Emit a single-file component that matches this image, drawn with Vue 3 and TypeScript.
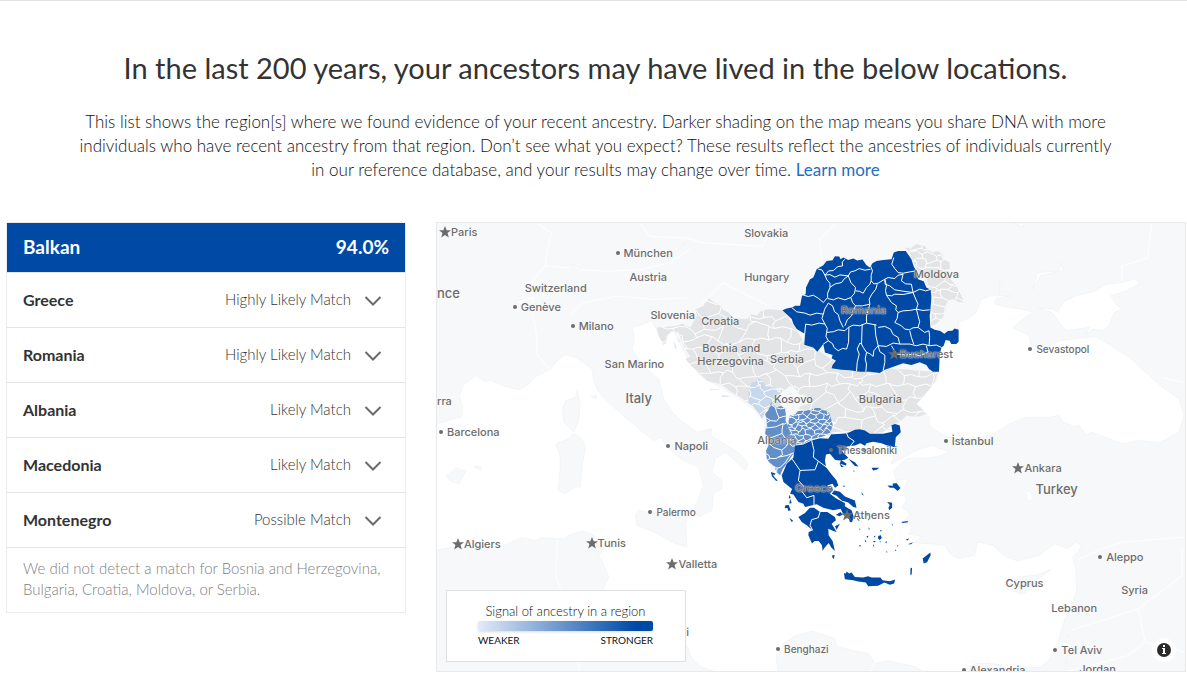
<script setup lang="ts">
import { ref } from 'vue'

interface Match { country: string; level: string }
interface Label { text: string; x: number; y: number; size: 's' | 'm' | 'l'; mark?: 'dot' | 'star' }

const matches: Match[] = [
  { country: 'Greece', level: 'Highly Likely Match' },
  { country: 'Romania', level: 'Highly Likely Match' },
  { country: 'Albania', level: 'Likely Match' },
  { country: 'Macedonia', level: 'Likely Match' },
  { country: 'Montenegro', level: 'Possible Match' },
]

const open = ref<string | null>(null)
function toggle(country: string) {
  open.value = open.value === country ? null : country
}

// Label places are in map units of 750 x 449.
const labels: Label[] = [
  { text: 'Paris', x: 2, y: 9, size: 'm', mark: 'star' },
  { text: 'nce', x: 0, y: 70, size: 'l' },
  { text: 'rra', x: 0, y: 178, size: 'm' },
  { text: 'München', x: 179, y: 30, size: 'm', mark: 'dot' },
  { text: 'Austria', x: 193, y: 54, size: 'm' },
  { text: 'Switzerland', x: 88, y: 65, size: 'm' },
  { text: 'Genève', x: 76, y: 84, size: 'm', mark: 'dot' },
  { text: 'Milano', x: 134, y: 103, size: 'm', mark: 'dot' },
  { text: 'Slovakia', x: 308, y: 10, size: 'm' },
  { text: 'Hungary', x: 308, y: 54, size: 'm' },
  { text: 'Slovenia', x: 214, y: 92, size: 'm' },
  { text: 'Croatia', x: 265, y: 98, size: 'm' },
  { text: 'Bosnia and', x: 266, y: 125, size: 'm' },
  { text: 'Herzegovina', x: 261, y: 138, size: 'm' },
  { text: 'Serbia', x: 334, y: 136, size: 'm' },
  { text: 'San Marino', x: 168, y: 141, size: 'm' },
  { text: 'Italy', x: 189, y: 175, size: 'l' },
  { text: 'Kosovo', x: 338, y: 176, size: 'm' },
  { text: 'Bulgaria', x: 423, y: 176, size: 'm' },
  { text: 'Moldova', x: 478, y: 51, size: 'm' },
  { text: 'Romania', x: 405, y: 87, size: 'm' },
  { text: 'Bucharest', x: 452, y: 131, size: 'm', mark: 'star' },
  { text: 'Barcelona', x: 2, y: 209, size: 'm', mark: 'dot' },
  { text: 'Napoli', x: 230, y: 223, size: 'm', mark: 'dot' },
  { text: 'Albania', x: 321, y: 217, size: 'm' },
  { text: 'Thessaloniki', x: 393, y: 228, size: 's', mark: 'dot' },
  { text: 'Greece', x: 359, y: 266, size: 'm' },
  { text: 'Athens', x: 405, y: 293, size: 'm', mark: 'star' },
  { text: 'Palermo', x: 212, y: 290, size: 's', mark: 'dot' },
  { text: 'Algiers', x: 15, y: 322, size: 'm', mark: 'star' },
  { text: 'Tunis', x: 149, y: 321, size: 'm', mark: 'star' },
  { text: 'Valletta', x: 230, y: 342, size: 'm', mark: 'star' },
  { text: 'i', x: 250, y: 410, size: 'm' },
  { text: 'Benghazi', x: 340, y: 427, size: 's', mark: 'dot' },
  { text: 'Sevastopol', x: 593, y: 126, size: 's', mark: 'dot' },
  { text: 'İstanbul', x: 508, y: 218, size: 'm', mark: 'dot' },
  { text: 'Ankara', x: 577, y: 246, size: 'm', mark: 'star' },
  { text: 'Turkey', x: 600, y: 267, size: 'l' },
  { text: 'Aleppo', x: 663, y: 335, size: 'm', mark: 'dot' },
  { text: 'Syria', x: 686, y: 368, size: 'm' },
  { text: 'Cyprus', x: 570, y: 361, size: 'm' },
  { text: 'Lebanon', x: 616, y: 386, size: 'm' },
  { text: 'Tel Aviv', x: 618, y: 428, size: 'm', mark: 'dot' },
  { text: 'Alexandria', x: 526, y: 448, size: 'm', mark: 'dot' },
  { text: 'Jordan', x: 644, y: 447, size: 'm' },
]

function place(l: Label) {
  return { left: (l.x / 750) * 100 + '%', top: (l.y / 449) * 100 + '%' }
}

// Uneven honeycomb used for the district borders inside a country.
function mesh(x0: number, y0: number, x1: number, y1: number, s: number): string {
  const noise = (a: number, b: number) => {
    const v = Math.sin(a * 127.1 + b * 311.7 + s) * 43758.5453
    return v - Math.floor(v) - 0.5
  }
  const point = (i: number, j: number): [number, number] => [
    x0 + i * s + noise(i, j) * s * 0.8,
    y0 + j * s + ((i + j) % 2 ? s * 0.16 : -s * 0.16) + noise(j + 57, i) * s * 0.8,
  ]
  const edge = (a: [number, number], b: [number, number], k: number) => {
    const mx = (a[0] + b[0]) / 2 + noise(k, a[0]) * s * 0.5
    const my = (a[1] + b[1]) / 2 + noise(a[1], k) * s * 0.5
    return `M${a.map(Math.round).join(' ')}L${Math.round(mx)} ${Math.round(my)} ${b.map(Math.round).join(' ')}`
  }
  let d = ''
  for (let j = 0; y0 + j * s <= y1; j++) {
    for (let i = 0; x0 + i * s <= x1; i++) {
      d += edge(point(i, j), point(i + 1, j), i + j)
      if ((i + j) % 2) d += edge(point(i, j), point(i, j + 1), i - j)
    }
  }
  return d
}

const greyMesh = mesh(640, 210, 1530, 650, 35)
const moldovaMesh = mesh(1390, 50, 1600, 320, 22)
const montenegroMesh = mesh(920, 450, 1050, 600, 24)
const albaniaMesh = mesh(970, 520, 1100, 770, 30)
const macedoniaMesh = mesh(1040, 540, 1200, 680, 12)

const grey = 'M662 314L692 312 722 309 737 302 762 314 782 279 777 259 802 249 817 226 835 240 852 249 862 262 877 269 890 284 912 289 935 288 945 275 962 278 975 264 997 259 1042 262 1100 350 1200 420 1400 440 1507 449 1497 479 1477 504 1460 525 1442 544 1455 555 1472 574 1442 584 1412 579 1397 594 1367 609 1342 629 1302 634 1257 624 1187 629 1180 640 1170 580 1100 560 1050 560 990 560 952 552 912 524 885 508 852 484 812 474 800 462 782 444 765 430 747 409 762 402 742 369 727 329 705 325 690 340 690 360 680 367 665 335Z'
const moldova = 'M1407 74L1425 76 1442 64 1467 69 1478 82 1492 89 1505 84 1522 94 1520 108 1542 118 1542 165 1562 190 1575 215 1587 238 1570 238 1552 229 1537 234 1530 262 1522 282 1500 305 1487 309 1487 209 1467 169 1442 139 1422 89Z'
const montenegro = 'M937 504L947 479 958 478 967 467 982 479 990 492 1012 494 1037 509 1017 524 1017 542 997 546 990 560 982 580 977 589 970 575 957 559 950 550 937 541Z'
const albania = 'M1007 534L1012 550 1022 554 1035 550 1047 559 1050 580 1048 594 1058 615 1062 634 1082 659 1072 694 1052 724 1040 740 1032 759 1020 748 1017 734 1000 720 992 709 990 684 997 670 997 644 987 634 992 594 987 574 997 562Z'
const macedonia = 'M1062 579L1078 575 1085 566 1102 564 1125 562 1135 556 1152 556 1160 562 1170 562 1182 574 1190 609 1182 634 1160 642 1132 649 1102 664 1077 666 1062 639 1055 604Z'
</script>

<template>
  <main class="page">
    <header class="intro">
      <h1>In the last 200 years, your ancestors may have lived in the below locations.</h1>
      <p>
        This list shows the region[s] where we found evidence of your recent ancestry. Darker shading on the map means you share DNA with more<br>
        individuals who have recent ancestry from that region. Don’t see what you expect? These results reflect the ancestries of individuals currently<br>
        in our reference database, and your results may change over time. <a href="#learn">Learn more</a>
      </p>
    </header>

    <div class="results">
      <section class="list" aria-label="Balkan">
        <h2 class="total"><span>Balkan</span><span>94.0%</span></h2>
        <ul>
          <li v-for="m in matches" :key="m.country">
            <button type="button" class="row" :aria-expanded="open === m.country" @click="toggle(m.country)">
              <span class="country">{{ m.country }}</span>
              <span class="level">{{ m.level }}</span>
              <svg class="chevron" viewBox="0 0 18 16" aria-hidden="true"><path d="M1.5 6L9 13.500L16.500 6" /></svg>
            </button>
          </li>
        </ul>
        <p class="none">We did not detect a match for Bosnia and Herzegovina, Bulgaria, Croatia, Moldova, or Serbia.</p>
      </section>

      <section class="map" aria-label="Map of ancestry regions">
        <svg class="chart" viewBox="0 0 2250 1347" preserveAspectRatio="none" aria-hidden="true">
          <defs>
            <clipPath id="c-grey"><path :d="grey" /></clipPath>
            <clipPath id="c-mol"><path :d="moldova" /></clipPath>
            <clipPath id="c-mon"><path :d="montenegro" /></clipPath>
            <clipPath id="c-alb"><path :d="albania" /></clipPath>
            <clipPath id="c-mac"><path :d="macedonia" /></clipPath>
          </defs>

          <g class="sea">
            <path d="M-5 607L42 591 72 584 77 554 67 519 82 484 117 459 142 476 167 474 197 489 247 501 277 484 302 459 342 439 360 415 387 394 422 407 467 439 472 480 487 509 527 549 572 589 632 639 652 654 674 644 687 669 712 689 742 714 787 734 802 789 782 840 770 860 787 884 827 864 832 814 857 799 857 774 827 749 837 709 867 689 902 719 927 744 937 724 912 694 857 659 822 639 827 619 782 629 742 600 712 574 682 530 667 469 637 444 607 409 587 379 594 349 587 314 622 304 642 294 652 304 682 364 697 334 712 324 742 384 762 424 797 464 852 494 902 524 952 559 985 600 990 700 1010 750 1060 700 1180 650 1370 620 1392 634 1382 669 1366 725 1412 699 1452 679 1492 669 1515 680 1542 686 1517 699 1482 706 1412 709 1372 744 1382 774 1417 769 1402 804 1412 834 1397 854 1422 874 1402 899 1432 914 1417 934 1462 944 1430 962 1482 964 1527 969 1547 999 1572 1009 1617 999 1627 959 1672 969 1712 1004 1747 1016 1812 999 1857 964 1897 979 1922 959 1937 969 1932 984 1912 1004 1922 1044 1924 1104 1907 1154 1887 1194 1867 1264 1842 1314 1812 1336 1712 1339 1672 1324 1622 1324 1570 1350 1467 1350 1432 1332 1357 1317 1317 1324 1297 1294 1252 1286 1202 1272 1197 1249 1127 1227 1077 1242 1042 1264 1020 1304 1027 1352 847 1352 792 1334 767 1309 750 1269 600 1190 530 1130 500 1100 517 1064 487 999 505 970 472 960 472 939 437 926 397 939 380 950 312 946 297 955 252 946 197 972 42 976 -5 984Z" />
            <path d="M1482 611L1482 584 1472 574 1442 544 1477 504 1502 474 1507 449 1520 359 1567 359 1570 299 1602 284 1622 269 1637 229 1667 219 1727 219 1682 227 1677 244 1722 254 1765 260 1792 269 1762 289 1732 314 1782 339 1785 365 1800 385 1822 379 1872 354 1952 344 1982 341 2027 369 2082 404 2132 449 2182 494 2232 529 2247 579 2232 629 2172 661 2117 654 2062 664 1972 629 1952 637 1932 609 1912 611 1882 597 1872 579 1842 584 1772 584 1722 604 1662 641 1592 649 1532 644Z" />
            <path d="M1867 269L1882 239 1922 219 1982 204 2012 184 2062 179 2102 167 2112 184 2072 204 2027 219 2042 244 2062 259 2037 269 2022 309 2002 324 1972 319 1952 337 1962 314 1892 324 1872 299 1850 269 1807 257 1850 258Z" />
            <path d="M1792 199L1807 149 1872 144 1877 119 1884 144 1817 157ZM1692 175L1698 200 1692 212ZM406 124L435 139 418 139ZM240 235L258 229 270 236 250 245ZM1736 0L1764 0 1764 12ZM1772 812L1782 802 1792 825 1786 838 1774 830ZM699 85L750 60 720 82ZM1895 1230L1903 1222 1900 1246ZM1893 1310L1897 1336 1890 1340Z" />
          </g>
          <g class="land">
            <path d="M422 504L430 539 427 589 412 629 382 599 377 559 387 534 417 524ZM357 664L395 650 412 633 432 645 447 674 437 724 432 794 412 794 387 814 364 804 370 744 370 700ZM597 879L607 864 632 869 682 879 762 864 747 904 752 974 717 964 652 929 602 909ZM27 762L62 734 72 744 87 744 67 784 47 779ZM109 732L132 732 134 744ZM463 520L480 520 478 530ZM1722 1084L1747 1064 1802 1059 1847 1042 1802 1074 1792 1099 1757 1116 1732 1104Z" />
          </g>
          <g class="frontier">
            <path d="M300 0L345 30 335 65 325 130 400 135M262 230L290 225 285 250M325 130L250 215M427 140L520 145 610 140 700 120 760 80M400 275L440 240 540 220 650 230 750 225M285 250L300 340 300 395 340 440M610 0L640 40 750 45M750 45L800 60 980 70 1000 20M780 260L860 180 1000 250M2150 0L2138 105 2060 130 2060 175M2180 465L2250 480M362 954L357 1060 372 1100M410 1250L430 1347M1930 1010L2000 980 2060 960 2250 944M1907 1224L2110 1160 2242 1060 2242 980M1870 1264L1910 1270M1900 1347L2080 1300 2130 1260 2110 1160M2130 1260L2250 1290M1317 1324L1300 1350M1180 300L1150 50 1200 0" />
          </g>

          <path class="grey" :d="grey" />
          <path class="district" :d="greyMesh" clip-path="url(#c-grey)" />
          <path class="kosovo" d="M1027 514L1050 500 1062 489 1080 499 1090 515 1112 519 1117 544 1092 552 1085 564 1062 574 1052 560 1032 544Z" />
          <path class="grey" :d="moldova" />
          <path class="district" :d="moldovaMesh" clip-path="url(#c-mol)" />
          <g class="grey">
            <path d="M722 345L732 358 725 355ZM712 352L722 378 715 375ZM800 485L825 484ZM820 498L855 502 822 502ZM855 518L890 520 860 524Z" />
          </g>
          <path class="pale" :d="montenegro" />
          <path class="district" :d="montenegroMesh" clip-path="url(#c-mon)" />
          <path class="mid" :d="albania" />
          <path class="district" :d="albaniaMesh" clip-path="url(#c-alb)" />
          <path class="mid" :d="macedonia" />
          <path class="district" :d="macedoniaMesh" clip-path="url(#c-mac)" />

          <g transform="translate(1002 -21)">
            <path class="strong" d="M37 283L50 278 65 275 76 270 90 270 96 240 107 235 108 215 120 190 130 185 140 160 160 148 170 135 188 133 195 121 208 122 212 130 220 125 235 132 250 128 262 134 278 131 290 148 300 155 308 142 320 135 340 132 365 130 372 110 385 105 408 105 425 130 432 152 440 165 445 190 462 196 470 215 483 222 485 245 482 285 480 300 482 335 495 342 512 346 524 354 535 346 548 345 555 338 567 342 567 378 560 385 545 385 540 375 528 373 522 390 515 395 510 420 508 468 490 468 478 460 470 448 450 440 425 448 400 443 375 452 345 462 330 472 300 468 270 468 240 464 215 462 185 458 188 448 198 435 185 428 188 418 165 410 160 385 152 395 142 408 130 395 103 387 105 355 80 340 70 325 65 310Z" />
            <path class="county" d="M145 160L156 162 165 178 180 176 195 184 210 177 235 180 242 168 255 165 268 158 285 163 302 160M225 130L217 138 218 150 204 152 190 164 176 165 165 178 171 192 180 202 180 215 173 232 173 245 160 260 146 248 130 238 115 242 100 238M180 214L196 204 215 200 222 190 235 180 243 200 257 215 254 232 243 245 225 252 205 246 190 252 173 248M302 150L308 165 304 178 304 195 312 204 325 202 345 190 350 210 347 224 350 238M257 225L268 226 280 232 290 215 300 205 304 195M65 275L80 288 105 292 120 298 140 292 160 295 164 280 175 262 188 270 194 288 205 296 210 315 220 335M160 295L156 308 165 325 148 322 125 328 107 325 104 355M165 325L172 338 170 350 190 348 205 342 225 345 235 335 250 328 270 330 290 322 320 328M170 350L168 362 175 375 160 385M175 375L188 384 192 395 205 405 218 398 230 400 236 380 237 335M243 245L248 260 257 270 250 285 245 300 232 312 225 330M257 270L278 270 300 265 298 250 306 235 318 220 322 205M300 265L296 280 290 300 290 322M277 325L275 385 270 382 262 400 268 415 262 440 260 466M275 385L280 395 290 410 286 430 290 445 288 468M290 410L300 414 310 422 312 405 325 390 318 360 315 325M325 335L345 332 362 340 370 356 385 365 390 385 370 382 350 392 325 390 330 408 345 418 345 440 340 465M390 385L420 385 440 390 460 385 480 390 500 388 515 395M345 190L346 205 360 210 375 222 400 226 430 230 450 220 468 225 485 220M372 125L366 145 375 158 385 170 400 172 420 168 440 165M345 190L355 185 375 188 385 178 400 175 395 195 408 204 425 205 430 230M350 238L365 240 375 235 400 236 430 230 438 250 445 265 440 280 420 284 400 285 385 290 378 282 380 270 365 260 350 238M385 290L382 308 375 320 395 330 405 340 420 342 430 336 445 335 450 318 445 300 440 280 460 284 480 282M420 345L425 365 432 385M445 335L465 350 478 345 480 365 478 390M470 390L475 410 450 420 430 415 410 418 380 415 365 390" />
          </g>

          <g transform="translate(912 444)">
            <path class="strong" d="M165 225L190 222 215 210 240 203 265 205 275 190 325 187 345 178 360 176 375 180 390 190 430 190 458 184 455 164 466 160 480 165 483 185 468 200 465 230 440 224 425 218 400 214 380 218 375 226 362 218 345 225 320 228 320 240 305 240 325 262 315 268 297 270 285 268 270 250 258 252 255 270 258 290 275 312 290 330 295 345 285 352 278 340 262 345 280 358 270 370 290 385 315 398 315 408 335 420 342 440 336 456 330 455 325 440 312 435 302 415 280 420 250 412 230 402 195 410 190 400 175 395 160 372 150 370 156 356 130 335 125 315 140 280 160 262Z" />
            <path class="strong" d="M175 440L195 428 210 412 222 412 240 425 262 425 285 440 288 450 275 460 290 485 280 482 265 475 266 495 278 512 285 542 274 532 266 518 252 535 248 542 246 525 236 512 224 512 216 520 205 495 206 485 218 480 200 465 185 455ZM283 360L300 364 315 378 345 390 350 412 340 410 325 396 305 390 290 376 275 370ZM288 433L302 425 308 433 298 438ZM285 468L300 460 290 478ZM303 268L320 280 318 285 300 280ZM325 265L345 275 356 288 345 287ZM298 278L312 290 304 290ZM368 235L380 236 378 245 368 242ZM395 292L418 292 412 297 400 300ZM443 345L460 346 458 340 470 338 482 353 474 362 462 352 450 352ZM442 395L457 397 457 412 448 420 446 412 450 404ZM485 455L503 452 505 456 488 458ZM549 565L572 547 573 555 562 576 552 580ZM512 595L517 592 516 612 512 615ZM312 608L318 610 320 604 328 610 335 607 345 620 370 622 385 618 395 622 422 622 428 630 450 633 466 628 463 640 450 644 434 637 415 647 385 648 378 637 355 634 340 630 315 627ZM92 305L106 309 104 314 98 312 104 322 113 330 108 332 96 318ZM148 373L152 383 146 384ZM136 405L146 404 152 420 145 422 142 413 134 414ZM148 442L160 452 154 454ZM277 555L284 554 282 566 277 562ZM150 385L155 398 148 400ZM365 365L372 375 366 372ZM415 498L422 494 426 502 420 509 415 505ZM378 428L386 434 380 436ZM348 425L360 428 355 433ZM350 440L360 452 354 450ZM383 445L390 448 386 450ZM358 475L362 475 360 480ZM387 470L390 478 386 476ZM380 498L386 496 382 504ZM402 498L407 496 404 502ZM400 512L409 512 403 517ZM375 510L380 512 376 516ZM358 524L363 524 360 530ZM400 522L404 528 400 528ZM436 515L441 513 440 520ZM420 480L426 480 423 484ZM455 463L460 462 458 466ZM498 508L508 504 504 511ZM504 522L520 516 514 522ZM438 543L444 545 440 547ZM466 538L470 540 466 542ZM472 525L476 526 474 530ZM420 512L424 515 420 516ZM340 300L345 302 342 304ZM308 346L316 346 312 350Z" />
            <path class="county" d="M215 210L222 240 220 260 235 272 225 298 180 300 158 268M235 272L262 292M180 300L175 330 195 352M275 190L320 187 325 200 343 212 325 235M185 362L200 382 222 375 222 405M240 425L235 442 215 448 210 465 218 480M158 268L152 262" />
          </g>
        </svg>

        <span v-for="l in labels" :key="l.text" class="label" :class="l.size" :style="place(l)">
          <svg v-if="l.mark === 'star'" class="star" viewBox="0 0 12 12" aria-hidden="true"><path d="M6 0L7.600 4.200H12L8.500 7L9.800 11.500L6 8.900L2.200 11.500L3.500 7L0 4.200H4.400Z" /></svg>
          <i v-else-if="l.mark === 'dot'" class="dot"></i>{{ l.text }}
        </span>

        <div class="legend">
          <p>Signal of ancestry in a region</p>
          <div class="scale"></div>
          <div class="ends"><span>WEAKER</span><span>STRONGER</span></div>
        </div>

        <button type="button" class="info" aria-label="Map information">
          <svg viewBox="0 0 24 24" aria-hidden="true">
            <circle cx="12" cy="12" r="12" fill="#fff" />
            <circle cx="12" cy="12" r="7" fill="#2b2b2b" />
            <path d="M11 7h2v2h-2zM10 10h3v5h1v1h-4v-1h1v-4h-1z" fill="#fff" />
          </svg>
        </button>
      </section>
    </div>
  </main>
</template>

<style>
body {
  margin: 0;
  background: #fff;
}
</style>

<style scoped>
.page {
  border-top: 1px solid #e2e2e2;
  font-family: Lato, "Liberation Sans", sans-serif;
  color: #333;
}
h1, h2, p, ul {
  margin: 0;
  padding: 0;
  font-weight: 400;
}
.intro {
  padding: 47px 0 40px 4px;
  text-align: center;
}
h1 {
  font-size: 29px;
  line-height: 40px;
  font-weight: 400;
  white-space: nowrap;
}
.intro p {
  margin-top: 22px;
  font-size: 17px;
  line-height: 24px;
  font-weight: 300;
  color: #111;
}
a {
  color: #1f6fc0;
  font-weight: 400;
  text-decoration: none;
}
.results {
  display: flex;
  align-items: flex-start;
  gap: 30px;
  padding: 0 1px 0 6px;
}
.list {
  box-sizing: border-box;
  flex: 0 0 400px;
  border: 1px solid #ececec;
}
.total {
  display: flex;
  justify-content: space-between;
  padding: 0 16px 2px;
  background: #0049a5;
  color: #fff;
  font-size: 19px;
  line-height: 47px;
  font-weight: 700;
}
ul {
  list-style: none;
  border-top: 1px solid #e4e4e4;
}
.row {
  box-sizing: border-box;
  display: flex;
  align-items: center;
  width: 100%;
  height: 55px;
  padding: 0 23px 2px 16px;
  border: 0;
  border-bottom: 1px solid #e4e4e4;
  background: #fff;
  font: inherit;
  text-align: left;
  cursor: pointer;
}
.country {
  flex: 1;
  font-size: 16px;
  font-weight: 700;
  color: #333;
}
.level {
  font-size: 15px;
  font-weight: 300;
  color: #333;
}
.chevron {
  width: 18px;
  height: 16px;
  margin-left: 13px;
  fill: none;
  stroke: #6b6b6b;
  stroke-width: 2;
}
.none {
  padding: 10px 16px 12px;
  font-size: 15px;
  line-height: 21px;
  font-weight: 300;
  color: #808080;
}
.map {
  box-sizing: border-box;
  position: relative;
  flex: 1;
  min-width: 0;
  aspect-ratio: 750 / 450;
  overflow: hidden;
  border: 1px solid #e8e9ea;
  background: #f7f8fa;
}
.chart {
  display: block;
  width: 100%;
  height: 100%;
}
.sea path {
  fill: #fff;
  stroke: #eff1f2;
  stroke-width: 2;
}
.land path {
  fill: #f7f8fa;
  stroke: #eff1f2;
  stroke-width: 2;
}
.frontier path {
  fill: none;
  stroke: #fdfdfe;
  stroke-width: 4;
}
.grey {
  fill: #e3e4e5;
}
.kosovo {
  fill: #f7f8fa;
}
.pale {
  fill: #c8d8ec;
}
.mid {
  fill: #638fc8;
}
.strong {
  fill: #0049a5;
}
.district,
.county {
  fill: none;
  stroke: #fff;
  stroke-width: 3;
}
.label {
  position: absolute;
  display: flex;
  align-items: center;
  transform: translateY(-50%);
  font-family: Inter, "Noto Sans", sans-serif;
  font-weight: 500;
  line-height: 14px;
  white-space: nowrap;
  color: #6c6c6c;
  text-shadow: 0 0 1px rgba(255, 255, 255, 0.8), 0 0 2px rgba(255, 255, 255, 0.8);
}
.s {
  font-size: 10px;
}
.m {
  font-size: 11px;
}
.l {
  font-size: 13px;
}
.star {
  width: 12px;
  height: 12px;
  fill: #6c6c6c;
}
.dot {
  width: 4px;
  height: 4px;
  margin-right: 4px;
  border-radius: 50%;
  background: #6c6c6c;
}
.legend {
  box-sizing: border-box;
  position: absolute;
  left: 9px;
  bottom: 9px;
  width: 240px;
  height: 72px;
  padding: 12px 32px 0 31px;
  border: 1px solid #dfe0e1;
  background: #fff;
  color: #111;
}
.legend p {
  font-size: 13px;
  line-height: 16px;
  font-weight: 300;
  text-align: center;
}
.scale {
  height: 10px;
  margin-top: 2px;
  border-radius: 2px;
  background: linear-gradient(90deg, #e3ebf7, #0049a5 90%);
  box-shadow: 0 1px 3px rgba(0, 0, 0, 0.15);
}
.ends {
  display: flex;
  justify-content: space-between;
  margin-top: 2px;
  font-size: 10px;
  line-height: 14px;
}
.info {
  position: absolute;
  right: 9px;
  bottom: 9px;
  width: 24px;
  height: 24px;
  padding: 0;
  border: 0;
  background: none;
  cursor: pointer;
}
.info svg {
  display: block;
}
</style>
